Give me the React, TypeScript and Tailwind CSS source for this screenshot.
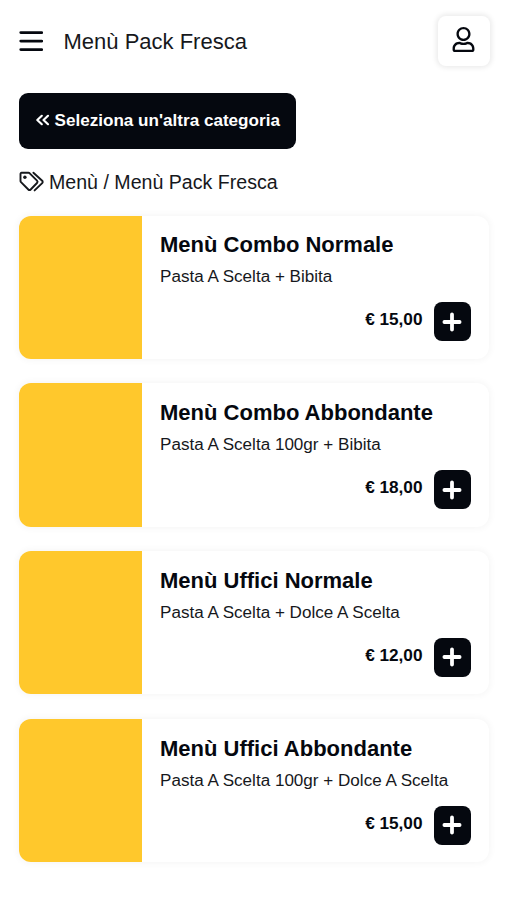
import { FaRegUser } from 'react-icons/fa';

interface MenuItem {
  name: string;
  description: string;
  price: string;
}

const items: MenuItem[] = [
  { name: 'Menù Combo Normale', description: 'Pasta A Scelta + Bibita', price: '€ 15,00' },
  { name: 'Menù Combo Abbondante', description: 'Pasta A Scelta 100gr + Bibita', price: '€ 18,00' },
  { name: 'Menù Uffici Normale', description: 'Pasta A Scelta + Dolce A Scelta', price: '€ 12,00' },
  {
    name: 'Menù Uffici Abbondante',
    description: 'Pasta A Scelta 100gr + Dolce A Scelta',
    price: '€ 15,00',
  },
];

function MenuIcon() {
  return (
    <svg
      viewBox="0 0 24 22"
      className="h-[22px] w-6 shrink-0"
      fill="none"
      stroke="currentColor"
      strokeWidth="2.9"
      strokeLinecap="round"
    >
      <path d="M1.8 2.6h21M1.8 11.1h21M1.8 19.6h21" />
    </svg>
  );
}

function TagsIcon() {
  return (
    <svg
      viewBox="0 0 25 22"
      className="mb-px h-[22px] w-[25px] shrink-0"
      fill="none"
      stroke="currentColor"
      strokeWidth="1.9"
      strokeLinecap="round"
      strokeLinejoin="round"
    >
      <path d="M1.5 2.8v7.1c0 .5.2 1 .5 1.3l7.300 7.300a1.700 1.700 0 0 0 2.400 0l6.300-6.500a1.700 1.700 0 0 0 0-2.400l-7.300-7.300a1.900 1.900 0 0 0-1.300-.5H2.500a1 1 0 0 0-1 1Z" />
      <path d="m14.400 1.700 8.800 8.100a1.600 1.600 0 0 1 0 2.300l-7.600 7.300" />
      <circle cx="5.900" cy="6.200" r="1.700" fill="currentColor" stroke="none" />
    </svg>
  );
}

function AnglesLeftIcon() {
  return (
    <svg
      viewBox="0 0 15 14"
      className="mr-[4.500px] mb-px h-[14px] w-[15px] shrink-0"
      fill="none"
      stroke="currentColor"
      strokeWidth="2.2"
      strokeLinecap="round"
      strokeLinejoin="round"
    >
      <path d="M6.800 2.800 2.300 7l4.500 4.200M13 2.800 8.500 7l4.500 4.200" />
    </svg>
  );
}

function PlusIcon() {
  return (
    <svg
      viewBox="0 0 20 20"
      className="size-5"
      fill="none"
      stroke="currentColor"
      strokeWidth="3.8"
      strokeLinecap="round"
    >
      <path d="M10 2.400v15.200M2.400 10h15.200" />
    </svg>
  );
}

function MenuCard({ item }: { item: MenuItem }) {
  return (
    <article className="flex h-[143.4px] overflow-hidden rounded-xl bg-white shadow-[0_0_6px_2px_rgba(0,0,0,0.035)]">
      <div className="w-[122.500px] shrink-0 bg-[#ffc82c]" />
      <div className="flex flex-1 flex-col pt-[14.9px] pr-[18px] pb-[17.6px] pl-[18.5px]">
        <h2 className="text-[22px] leading-[30px] font-bold whitespace-nowrap">{item.name}</h2>
        <p className="mt-1 text-[17.08px] leading-[26px] whitespace-nowrap text-[#16181c]">
          {item.description}
        </p>
        <div className="mt-auto flex items-center justify-end gap-[11px]">
          <span className="pb-[3px] text-[17.2px] font-bold">{item.price}</span>
          <button
            type="button"
            aria-label="Aggiungi"
            className="flex h-[39px] w-[37.5px] items-center justify-center rounded-lg bg-[#05080f] text-white"
          >
            <PlusIcon />
          </button>
        </div>
      </div>
    </article>
  );
}

export default function App() {
  return (
    <div className="min-h-[900px] bg-white px-[19px] pt-[15px] font-['Liberation_Sans',Arial,sans-serif] text-[#05080f]">
      <header className="-mr-[2px] flex h-[51px] items-center">
        <MenuIcon />
        <h1 className="ml-[20.5px] pt-0.5 text-[22px] text-[#16181c]">Menù Pack Fresca</h1>
        <button
          type="button"
          aria-label="Profilo"
          className="ml-auto flex h-[50px] w-[52px] items-center justify-center rounded-lg bg-white shadow-[0_0_5px_2px_rgba(0,0,0,0.08)]"
        >
          <FaRegUser className="mr-[1.5px] mb-0.5 size-[25px]" />
        </button>
      </header>

      <button
        type="button"
        className="mt-[26.5px] flex h-[56px] w-[277px] items-center rounded-[9px] bg-[#05080f] pl-4 text-[17.1px] font-bold whitespace-nowrap text-white"
      >
        <AnglesLeftIcon />
        Seleziona un'altra categoria
      </button>

      <nav className="mt-5 flex h-7 items-center gap-[5px] text-[19.6px] text-[#16181c]">
        <TagsIcon />
        <span>Menù / Menù Pack Fresca</span>
      </nav>

      <main className="mt-[19px] mr-[-1px] flex flex-col gap-[24.4px]">
        {items.map((item) => (
          <MenuCard key={item.name} item={item} />
        ))}
      </main>
    </div>
  );
}
